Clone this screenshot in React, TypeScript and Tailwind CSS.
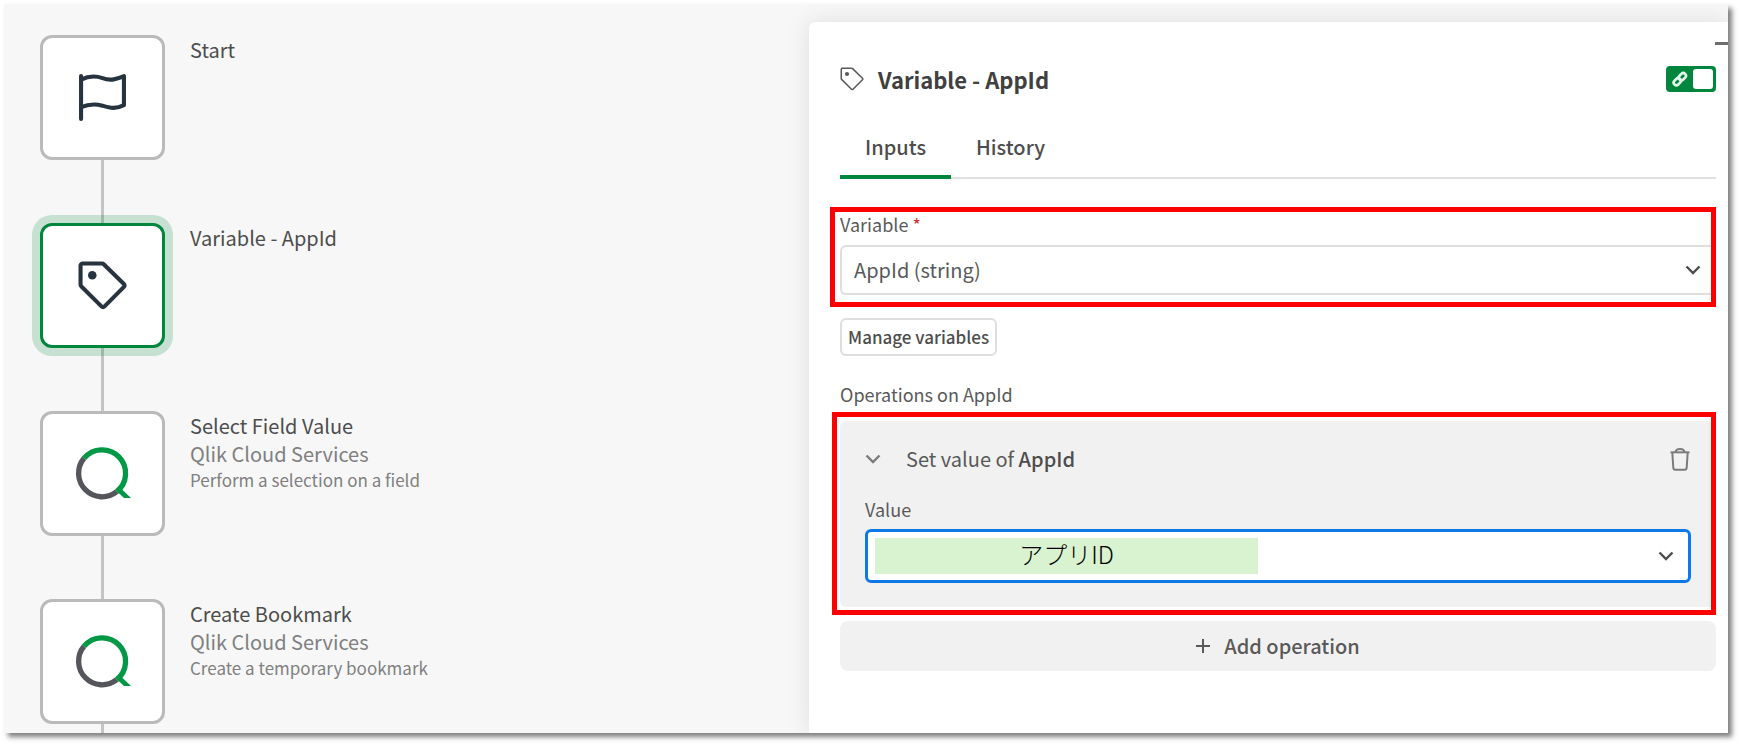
import React, { useState } from 'react';

type Step = {
  id: string;
  icon: 'flag' | 'tag' | 'qlik';
  title: string;
  connector?: string;
  description?: string;
};

const steps: Step[] = [
  { id: 'start', icon: 'flag', title: 'Start' },
  { id: 'variable', icon: 'tag', title: 'Variable - AppId' },
  {
    id: 'select',
    icon: 'qlik',
    title: 'Select Field Value',
    connector: 'Qlik Cloud Services',
    description: 'Perform a selection on a field',
  },
  {
    id: 'bookmark',
    icon: 'qlik',
    title: 'Create Bookmark',
    connector: 'Qlik Cloud Services',
    description: 'Create a temporary bookmark',
  },
];

const FlagIcon = () => (
  <svg viewBox="0 0 48 48" className="w-[49px] h-[49px]" fill="none" stroke="#27343f" strokeWidth="4" strokeLinecap="round" strokeLinejoin="round">
    <path d="M3 3V45" />
    <path d="M3 6.500C11 2.500 17 2.500 24 5C32 8 38 6 45 3V31.500C37 35.500 32 34.500 24 32C17 30 11 30 3 33.500" />
  </svg>
);

const TagIcon = ({ className, strokeWidth = 4 }: { className: string; strokeWidth?: number }) => (
  <svg viewBox="0 0 48 48" className={className} fill="none" stroke="currentColor" strokeWidth={strokeWidth} strokeLinejoin="round">
    <path d="M4.500 2.500H23.500C24.200 2.500 24.800 2.800 25.200 3.200L45 22.600C45.900 23.500 45.900 24.500 45 25.400L26 44.500C25.100 45.400 23.900 45.400 23 44.500L3.600 25.200C3.200 24.800 2.500 24 2.500 23.400V4.500C2.500 3.400 3.400 2.500 4.500 2.500Z" />
    <circle cx="14" cy="14" r="4.200" fill="currentColor" stroke="none" />
  </svg>
);

const QlikIcon = () => (
  <svg viewBox="0 0 55 55" className="w-[55px] h-[55px] overflow-visible" fill="none">
    <path d="M9 12.300A23.500 23.500 0 0 0 41.700 45.700" stroke="#54565b" strokeWidth="5.300" />
    <path d="M9 12.300A23.500 23.500 0 1 1 41.700 45.700" stroke="#009845" strokeWidth="5.300" />
    <path d="M41.500 45L46 42.500L56 52H49Z" fill="#009845" />
  </svg>
);

const Chevron = ({ className }: { className: string }) => (
  <svg viewBox="0 0 16 10" className={`w-4 h-[10px] pointer-events-none ${className}`} fill="none" stroke="currentColor" strokeWidth="2.400">
    <path d="M1.500 1.500L8 8L14.500 1.500" />
  </svg>
);

const TrashIcon = () => (
  <svg viewBox="0 0 20 24" className="w-5 h-6" fill="none" stroke="#7b7b7b" strokeWidth="2" strokeLinejoin="round">
    <path d="M0.500 5.300H19.500" />
    <path d="M5.500 5C5.800 2.900 7.200 1.900 10 1.900C12.800 1.900 14.200 2.900 14.500 5" />
    <path d="M2.300 5.500L3.300 20.700C3.400 22 4.100 22.700 5.300 22.700H14.700C15.900 22.700 16.600 22 16.700 20.700L17.700 5.500" />
  </svg>
);

const LinkIcon = () => (
  <svg viewBox="0 0 18 18" className="w-[18px] h-[18px]" fill="none" stroke="#e4f5ea" strokeWidth="2.600">
    <rect x="-4" y="-2.700" width="8" height="5.400" rx="2.700" transform="translate(6.300 11.700) rotate(-45)" />
    <rect x="-4" y="-2.700" width="8" height="5.400" rx="2.700" transform="translate(11.300 6.700) rotate(-45)" />
  </svg>
);

const StepIcon = ({ icon }: { icon: Step['icon'] }) => {
  if (icon === 'flag') return <FlagIcon />;
  if (icon === 'tag') return <TagIcon className="w-[49px] h-[49px] text-[#27343f]" />;
  return <QlikIcon />;
};

const Canvas = ({ selected, onSelect }: { selected: string; onSelect: (id: string) => void }) => (
  <main className="flex-[806] min-w-0 pt-[31px] pl-9">
    {steps.map((step, i) => (
      <div key={step.id} className="flex gap-[25px]">
        <div className="flex flex-col items-center">
          <button
            aria-label={step.title}
            onClick={() => onSelect(step.id)}
            className={`relative w-[125px] h-[125px] rounded-xl border-3 bg-white flex items-center justify-center ${
              selected === step.id ? 'border-[#00873d] ring-8 ring-[#00873d]/20' : 'border-[#bababa]'
            }`}
          >
            <StepIcon icon={step.icon} />
          </button>
          <div className={`w-[3px] bg-[#c4c4c4] ${i === steps.length - 1 ? 'h-[9px]' : 'h-[63px]'}`} />
        </div>
        <div className="pt-px">
          <h3 className="text-[20px] leading-7 text-[#4d4d4d]">{step.title}</h3>
          {step.connector && <p className="text-[20px] leading-7 text-[#808080]">{step.connector}</p>}
          {step.description && <p className="text-[17px] leading-6 text-[#808080]">{step.description}</p>}
        </div>
      </div>
    ))}
  </main>
);

const Panel = () => {
  const [enabled, setEnabled] = useState(true);
  const [tab, setTab] = useState('Inputs');
  const [value, setValue] = useState('アプリID');

  return (
    <aside className="flex-[918] min-w-0 mt-[18px] pl-[31px] pr-3 bg-white rounded-tl-md shadow-[0_0_24px_rgba(0,0,0,0.1)]">
      <div className="flex justify-end -mr-3 pt-5">
        <button aria-label="Minimize" className="w-[13px] h-[3px] bg-[#6e6e6e]" />
      </div>

      <header className="flex items-center mt-[18px] h-9">
        <TagIcon className="w-6 h-6 mb-1 text-[#595959]" strokeWidth={3} />
        <h2 className="self-start ml-[14px] text-[22px] leading-8 font-bold text-[#404040]">Variable - AppId</h2>
        <label className="relative ml-auto mb-1 w-[50px] h-[26px] rounded bg-[#00873d] flex items-center justify-between pl-[5px] pr-[3px]">
          <input
            type="checkbox"
            aria-label="Enable block"
            checked={enabled}
            onChange={(e) => setEnabled(e.target.checked)}
            className="absolute inset-0 opacity-0"
          />
          <LinkIcon />
          <span className="w-5 h-5 rounded-[3px] bg-white" />
        </label>
      </header>

      <nav className="flex mt-[34px] border-b-2 border-[#e0e0e0]">
        {['Inputs', 'History'].map((name) => (
          <button
            key={name}
            onClick={() => setTab(name)}
            className={`-mb-[2px] px-[25px] pb-[14px] text-[20px] leading-7 font-medium text-[#4d4d4d] border-b-4 ${
              tab === name ? 'border-[#00873d]' : 'border-transparent'
            }`}
          >
            {name}
          </button>
        ))}
      </nav>

      <section className="mt-7 -ml-[10px] border-5 border-[#ff0000] pl-[5px] pb-[7px]">
        <label htmlFor="variable" className="block mb-[9px] text-[18px] leading-6 text-[#595959]">
          Variable <span className="text-[#dc2c2c]">*</span>
        </label>
        <div className="relative">
          <select
            id="variable"
            className="appearance-none block w-full h-[50px] rounded-l-md border-2 border-r-0 border-[#dedede] bg-white pl-3 text-[20px] text-[#595959]"
          >
            <option>AppId (string)</option>
          </select>
          <Chevron className="absolute right-[10px] top-5 text-[#4d4d4d]" />
        </div>
      </section>

      <button className="block mt-[11px] h-[38px] rounded-md border-2 border-[#dedede] px-[6px] text-[17px] leading-8 font-medium text-[#4d4d4d]">
        Manage variables
      </button>

      <h4 className="mt-[22px] mb-[2px] text-[18px] leading-8 text-[#595959]">Operations on AppId</h4>

      <section className="-ml-2 border-5 border-[#ff0000] pt-1 pl-[3px] pb-[3px]">
        <div className="rounded-l-md bg-[#f1f1f1] pl-[25px] pr-5 pt-5 pb-6">
          <div className="flex items-center h-9">
            <button className="flex items-center" aria-label="Collapse operation">
              <Chevron className="text-[#7b7b7b]" />
            </button>
            <p className="ml-[25px] text-[20px] leading-9 text-[#595959]">
              Set value of <b className="font-medium text-[#4d4d4d]">AppId</b>
            </p>
            <button className="ml-auto mr-px" aria-label="Delete operation">
              <TrashIcon />
            </button>
          </div>
          <label htmlFor="value" className="block mt-4 text-[18px] leading-8 text-[#595959]">
            Value
          </label>
          <div className="mt-1 flex items-center h-[54px] rounded-md border-3 border-[#0f78e6] bg-white pl-[7px] pr-[14px]">
            <input
              id="value"
              value={value}
              onChange={(e) => setValue(e.target.value)}
              className="w-[383px] h-9 pb-1 bg-[#d9f2d0] text-center text-[24px] font-light text-black outline-none"
            />
            <button className="ml-auto" aria-label="Open value picker">
              <Chevron className="text-[#4d4d4d]" />
            </button>
          </div>
        </div>
      </section>

      <button className="mt-[6px] mb-[62px] w-full h-[50px] rounded-lg bg-[#f1f1f1] flex items-center justify-center gap-[14px] text-[20px] font-medium text-[#595959]">
        <svg viewBox="0 0 14 14" className="w-[14px] h-[14px]" stroke="currentColor" strokeWidth="2">
          <path d="M7 0V14M0 7H14" />
        </svg>
        Add operation
      </button>
    </aside>
  );
};

export default function App() {
  const [selected, setSelected] = useState('variable');

  return (
    <div className="bg-white pt-1 pl-1 pr-[13px] pb-[13px] font-['Noto_Sans_CJK_JP',sans-serif]">
      <div className="shadow-[4px_4px_5px_rgba(0,0,0,0.5)]">
        <div className="flex overflow-hidden bg-[#f7f7f7]">
          <Canvas selected={selected} onSelect={setSelected} />
          <Panel />
        </div>
      </div>
    </div>
  );
}
